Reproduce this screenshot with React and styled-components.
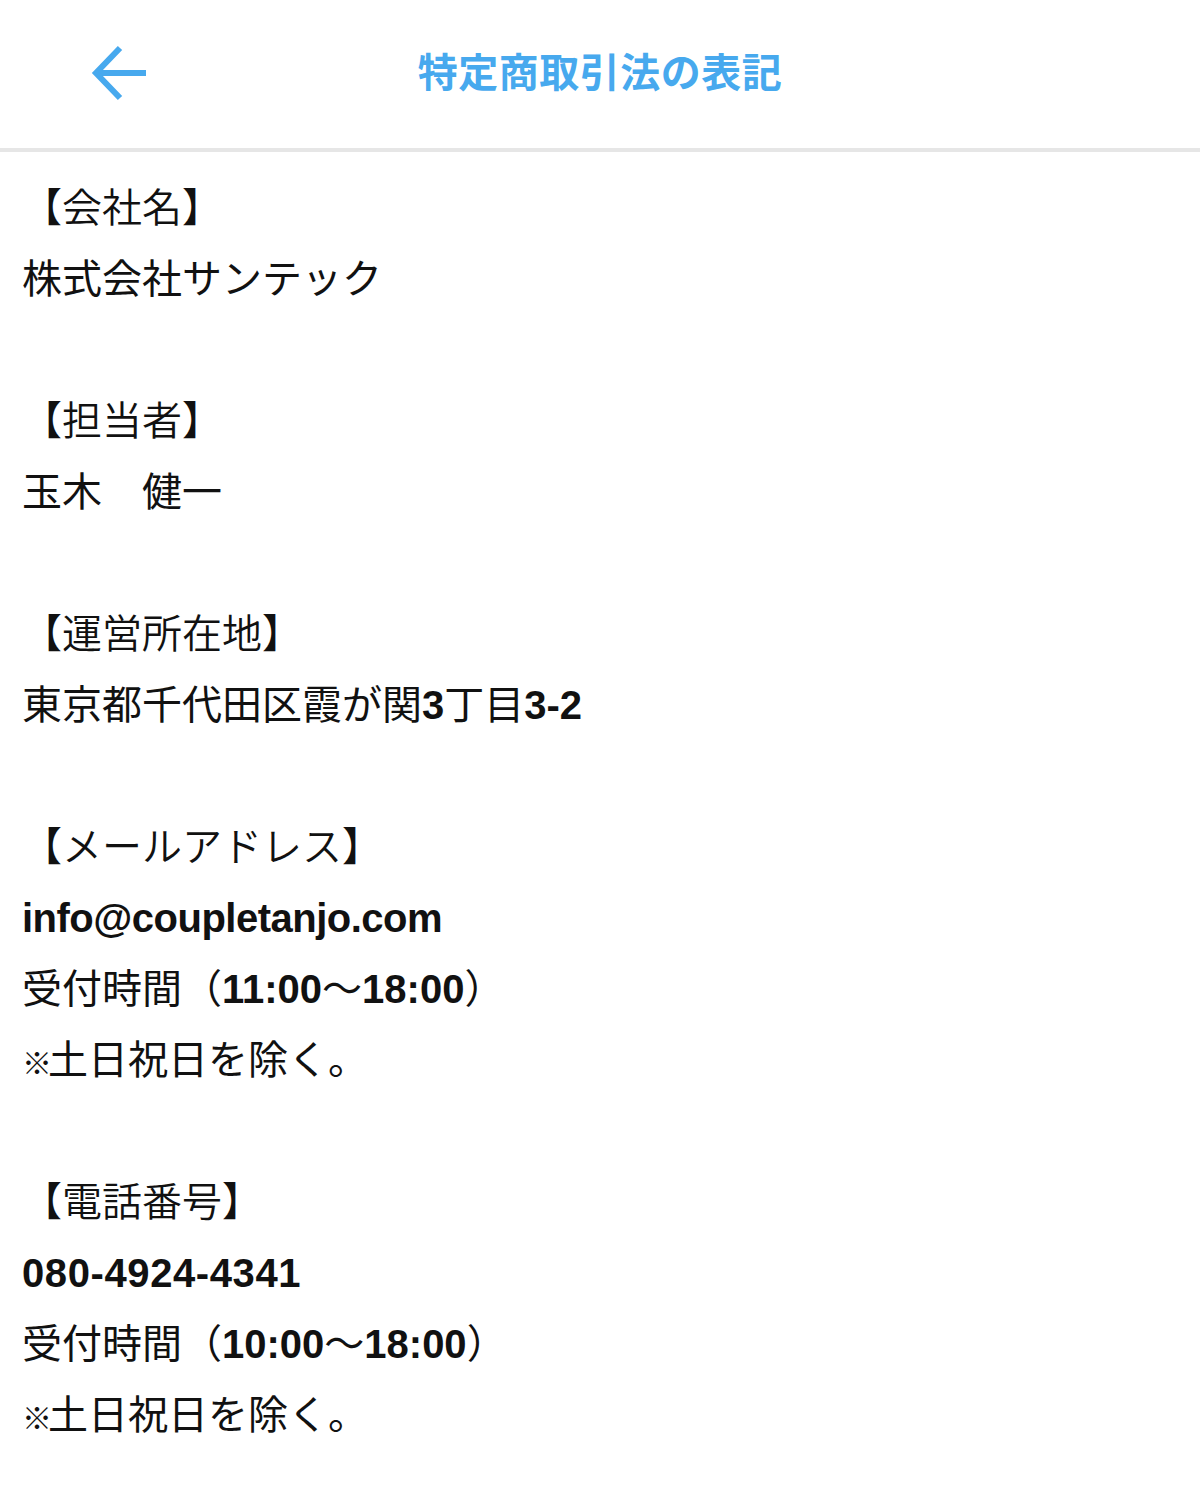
import styled, { createGlobalStyle } from "styled-components";

const GlobalStyle = createGlobalStyle`
  body {
    margin: 0;
    background: #fff;
    font-family: "Noto Sans CJK JP", "Liberation Sans", sans-serif;
    color: #111;
  }
`;

const Page = styled.div`
  width: 1200px;
  min-height: 1486px;
  background: #fff;
`;

const Header = styled.header`
  height: 148px;
  display: grid;
  grid-template-columns: 240px 1fr 240px;
  align-items: center;
  border-bottom: 4px solid #e6e6e6;
`;

const BackButton = styled.button`
  justify-self: start;
  margin-left: 86px;
  margin-top: -4px;
  padding: 0;
  border: 0;
  background: none;
  width: 64px;
  height: 64px;
  display: flex;
  align-items: center;
  justify-content: center;
`;

const Title = styled.h1`
  margin: 0;
  margin-top: -8px;
  text-align: center;
  font-size: 40px;
  font-weight: 700;
  color: #47a9ee;
  letter-spacing: 0.5px;
`;

const Body = styled.main`
  padding: 18px 22px 40px;
  font-size: 40px;
  line-height: 71px;
  font-weight: 400;
`;

const Section = styled.section`
  & + & {
    margin-top: 71px;
  }
`;

const Line = styled.p`
  margin: 0;
  height: 71px;
  white-space: nowrap;
`;

const Label = styled(Line)`
  font-weight: 350;
`;

const Latin = styled.span`
  font-family: "Liberation Sans", sans-serif;
  font-weight: 700;
  font-size: 40px;
  line-height: 1;
  letter-spacing: ${(p) => p.$spacing || "0"};
`;

const Mark = styled.span`
  font-size: 30px;
  font-weight: 700;
  line-height: 1;
  letter-spacing: -4px;
`;

function BackArrow() {
  return (
    <svg width="60" height="60" viewBox="0 0 60 60" fill="none">
      <path d="M58 31H8" stroke="#47a9ee" strokeWidth="6" />
      <path
        d="M32 6L8 31L32 56"
        stroke="#47a9ee"
        strokeWidth="6"
        strokeLinejoin="miter"
      />
    </svg>
  );
}

function App() {
  return (
    <Page>
      <GlobalStyle />
      <Header>
        <BackButton aria-label="戻る">
          <BackArrow />
        </BackButton>
        <Title>特定商取引法の表記</Title>
        <div />
      </Header>

      <Body>
        <Section>
          <Label>【会社名】</Label>
          <Line>株式会社サンテック</Line>
        </Section>

        <Section>
          <Label>【担当者】</Label>
          <Line>玉木　健一</Line>
        </Section>

        <Section>
          <Label>【運営所在地】</Label>
          <Line>
            東京都千代田区霞が関<Latin>3</Latin>丁目<Latin>3-2</Latin>
          </Line>
        </Section>

        <Section>
          <Label>【メールアドレス】</Label>
          <Line>
            <Latin $spacing="-0.5px">info@coupletanjo.com</Latin>
          </Line>
          <Line>
            受付時間（<Latin>11:00</Latin>〜<Latin>18:00</Latin>）
          </Line>
          <Line>
            <Mark>※</Mark>土日祝日を除く。
          </Line>
        </Section>

        <Section>
          <Label>【電話番号】</Label>
          <Line>
            <Latin $spacing="0.6px">080-4924-4341</Latin>
          </Line>
          <Line>
            受付時間（<Latin>10:00</Latin>〜<Latin>18:00</Latin>）
          </Line>
          <Line>
            <Mark>※</Mark>土日祝日を除く。
          </Line>
        </Section>
      </Body>
    </Page>
  );
}

export default App;
